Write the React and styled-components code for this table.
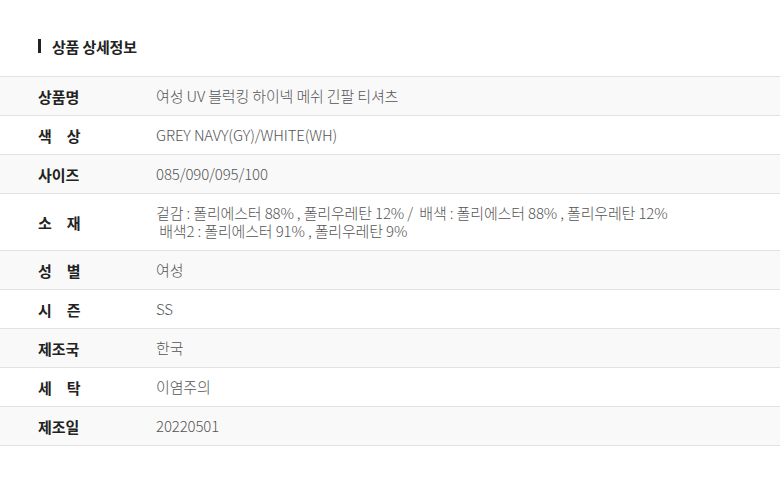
import React from "react";
import styled, { createGlobalStyle } from "styled-components";

const Global = createGlobalStyle`
  html, body { margin: 0; padding: 0; background: #fff; }
  body { font-family: "Noto Sans CJK KR", "Noto Sans", sans-serif; }
`;

const Page = styled.div`
  width: 780px;
  height: 484px;
  background: #fff;
  overflow: hidden;
`;

const Title = styled.h2`
  margin: 0;
  height: 76px;
  display: flex;
  align-items: center;
  gap: 11px;
  padding: 16px 0 0 38px;
  box-sizing: border-box;
  font-size: 15px;
  font-weight: 700;
  color: #222;
  letter-spacing: -0.2px;
  &::before {
    content: "";
    width: 3px;
    height: 14px;
    background: #222;
  }
`;

const Table = styled.div`
  border-top: 1px solid #e2e2e2;
`;

const Row = styled.div`
  display: grid;
  grid-template-columns: 156px 1fr;
  align-items: center;
  min-height: ${(p) => p.$h || 38}px;
  border-bottom: 1px solid #e2e2e2;
  background: ${(p) => (p.$alt ? "#f9f9f9" : "#fff")};
`;

const Label = styled.div`
  padding-left: 38px;
  font-size: 15px;
  font-weight: 700;
  color: #222;
`;

const Value = styled.div`
  font-size: 15px;
  font-weight: 300;
  color: #555;
  line-height: 18px;
  letter-spacing: -0.15px;
  white-space: pre;
`;

const rows = [
  ["상품명", "여성 UV 블럭킹 하이넥 메쉬 긴팔 티셔츠"],
  ["색　상", "GREY NAVY(GY)/WHITE(WH)"],
  ["사이즈", "085/090/095/100"],
  [
    "소　재",
    "겉감 : 폴리에스터 88% , 폴리우레탄 12% /  배색 : 폴리에스터 88% , 폴리우레탄 12%\n 배색2 : 폴리에스터 91% , 폴리우레탄 9%",
    56,
  ],
  ["성　별", "여성"],
  ["시　즌", "SS"],
  ["제조국", "한국"],
  ["세　탁", "이염주의"],
  ["제조일", "20220501"],
];

export default function App() {
  return (
    <Page>
      <Global />
      <Title>상품 상세정보</Title>
      <Table>
        {rows.map(([l, v, h], i) => (
          <Row key={l} $alt={i % 2 === 0} $h={h}>
            <Label>{l}</Label>
            <Value>{v}</Value>
          </Row>
        ))}
      </Table>
    </Page>
  );
}
